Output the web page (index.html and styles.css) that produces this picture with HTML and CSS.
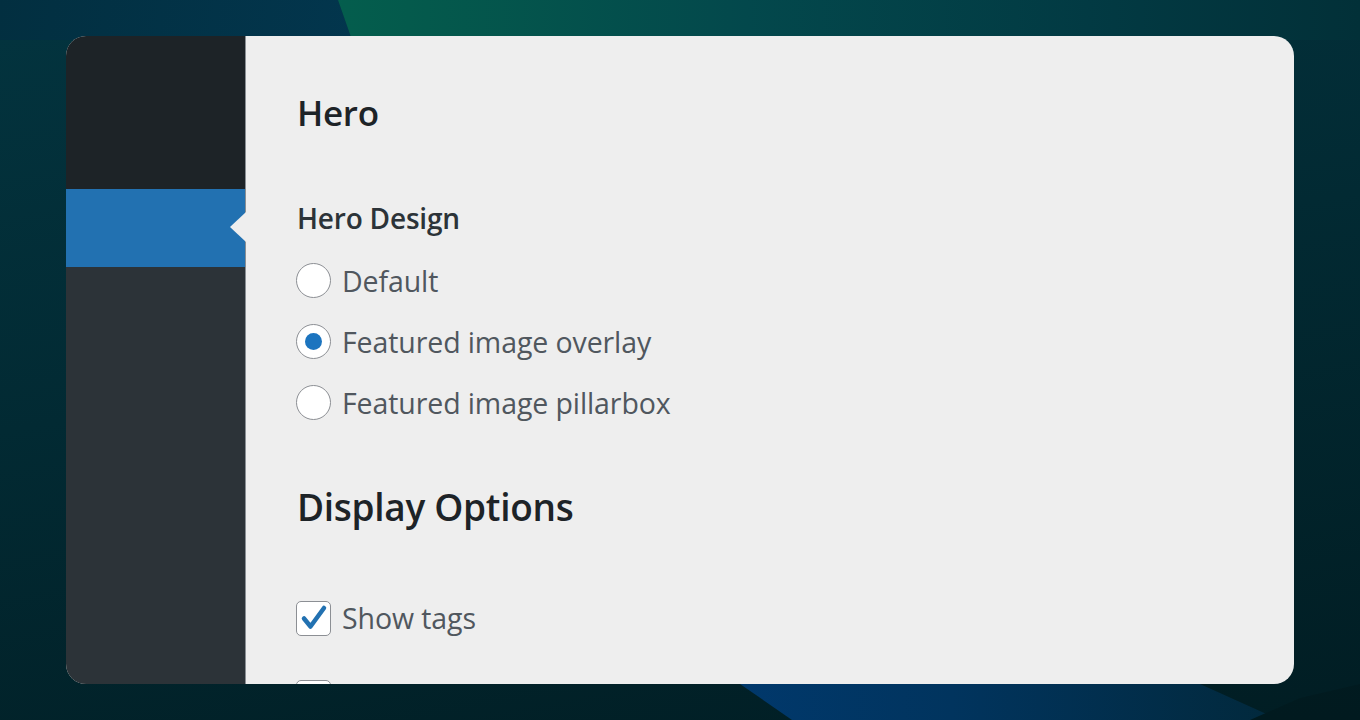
FILE: index.html
```html
<!DOCTYPE html>
<html lang="en">
  <head>
    <meta charset="UTF-8" />
    <meta name="viewport" content="width=device-width, initial-scale=1.0" />
    <title>Theme options</title>
    <link rel="stylesheet" href="styles.css">
  </head>
  <body>
    <div class="backdrop">
      <div class="shape shape-blue-left"></div>
      <div class="shape shape-green"></div>
      <div class="shape shape-blue-bottom"></div>
      <div class="shape shape-dark-corner"></div>
    </div>

    <div class="window">
      <aside class="sidebar">
        <div class="side-top"></div>
        <div class="side-active"></div>
        <div class="side-rest"></div>
      </aside>

      <main class="content">
        <h2 class="section-title">Hero</h2>

        <h3 class="field-title">Hero Design</h3>
        <label class="option">
          <span class="radio"></span>
          <span>Default</span>
        </label>
        <label class="option">
          <span class="radio checked"></span>
          <span>Featured image overlay</span>
        </label>
        <label class="option">
          <span class="radio"></span>
          <span>Featured image pillarbox</span>
        </label>

        <h2 class="section-title big">Display Options</h2>

        <label class="option check-row">
          <span class="checkbox">
            <svg viewBox="0 0 36 36" width="36" height="36"><path d="M8 18.5 L14.5 26.5 L28 8" fill="none" stroke="#2271b1" stroke-width="4.5" stroke-linecap="round" stroke-linejoin="round"/></svg>
          </span>
          <span>Show tags</span>
        </label>
        <label class="option check-row">
          <span class="checkbox"></span>
          <span></span>
        </label>
      </main>
    </div>
  </body>
</html>
```

FILE: styles.css
```css
body {
  margin: 0;
  width: 1360px;
  height: 720px;
  overflow: hidden;
  position: relative;
  background: linear-gradient(170deg, #03343f 0%, #022a33 45%, #011d23 100%);
  font-family: "Open Sans", "Noto Sans", Arial, sans-serif;
}
.backdrop {
  position: absolute;
  inset: 0;
}
.shape {
  position: absolute;
  inset: 0;
}
.shape-blue-left {
  background: linear-gradient(100deg, #022f40 0%, #033e5e 55%, #00458c 100%);
  clip-path: polygon(0 0, 338px 0, 352px 40px, 0 40px);
}
.shape-green {
  background: linear-gradient(90deg, #046e53 0%, #045a4c 30%, #03484c 55%, #023a43 80%, #023038 100%);
  clip-path: polygon(338px 0, 1360px 0, 1360px 40px, 352px 40px);
}
.shape-blue-bottom {
  background: linear-gradient(90deg, #013468 0%, #003c78 40%, #01345e 70%, #022633 100%);
  clip-path: polygon(740px 684px, 1200px 684px, 1280px 720px, 792px 720px);
}
.shape-dark-corner {
  background: linear-gradient(180deg, #01242b 0%, #011a1f 100%);
  clip-path: polygon(1250px 720px, 1300px 698px, 1360px 684px, 1360px 720px);
}
.window {
  position: relative;
  margin: 36px 0 0 66px;
  width: 1228px;
  height: 648px;
  border-radius: 20px;
  overflow: hidden;
  display: flex;
  background: #eeeeee;
}
.sidebar {
  width: 179px;
  display: flex;
  flex-direction: column;
  border-right: 1px solid #8a8f94;
}
.side-top {
  height: 153px;
  background: #1d2327;
}
.side-active {
  height: 78px;
  background: #2271b1;
  position: relative;
}
.side-active::after {
  content: "";
  position: absolute;
  right: -1px;
  top: 23px;
  border-style: solid;
  border-width: 15px 16px 15px 0;
  border-color: transparent #eeeeee transparent transparent;
}
.side-rest {
  flex: 1;
  background: #2c3338;
}
.content {
  flex: 1;
  padding: 52px 0 0 51px;
  color: #50575e;
}
.section-title {
  margin: 0 0 63px 0;
  font-size: 35px;
  font-weight: 600;
  color: #1d2327;
  line-height: 50px;
  letter-spacing: -0.3px;
}
.section-title.big {
  font-size: 37px;
  line-height: 52px;
  margin: 48px 0 54px 0;
}
.field-title {
  margin: 0 0 15px 0;
  font-size: 28px;
  font-weight: 600;
  color: #2c3338;
  line-height: 34px;
  letter-spacing: -0.2px;
}
.option {
  display: flex;
  align-items: center;
  gap: 11px;
  height: 61px;
  font-size: 28.5px;
  letter-spacing: -0.1px;
  margin-left: -1px;
}
.radio {
  width: 33px;
  height: 33px;
  border: 1.5px solid #8c8f94;
  border-radius: 50%;
  background: #ffffff;
  display: flex;
  align-items: center;
  justify-content: center;
}
.radio.checked::after {
  content: "";
  width: 17px;
  height: 17px;
  border-radius: 50%;
  background: #1c74bf;
}
.checkbox {
  width: 33px;
  height: 33px;
  border: 1.5px solid #8c8f94;
  border-radius: 5px;
  background: #ffffff;
}
.checkbox svg {
  display: block;
  margin: -1.5px;
}
.check-row {
  height: 62px;
  margin-bottom: 17px;
}
```
